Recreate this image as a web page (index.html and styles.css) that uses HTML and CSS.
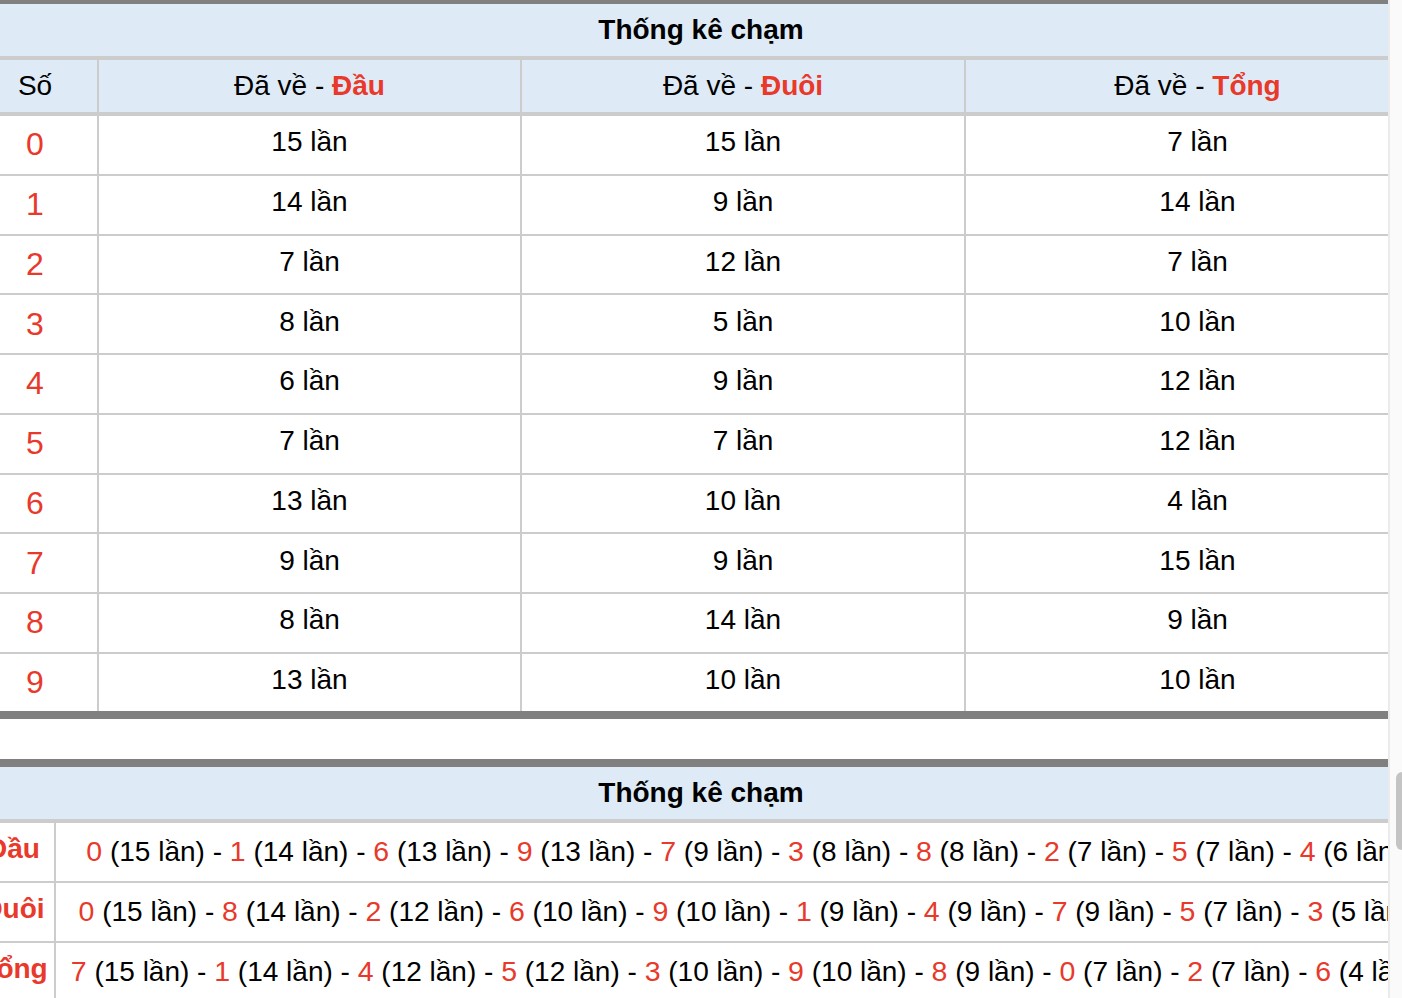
FILE: index.html
```html
<!DOCTYPE html>
<html lang="vi">
<head>
<meta charset="utf-8">
<title>Thống kê chạm</title>
<link rel="stylesheet" href="styles.css">
</head>
<body>
<div class="page">
  <div class="wrap">
    <table class="stat t1">
      <colgroup>
        <col class="w1"><col class="w2"><col class="w3"><col class="w4">
      </colgroup>
      <thead>
        <tr><th colspan="4" class="title">Thống kê chạm</th></tr>
        <tr class="head">
          <th>Số</th>
          <th>Đã về - <span class="hl">Đầu</span></th>
          <th>Đã về - <span class="hl">Đuôi</span></th>
          <th>Đã về - <span class="hl">Tổng</span></th>
        </tr>
      </thead>
      <tbody>
        <tr><td class="num">0</td><td>15 lần</td><td>15 lần</td><td>7 lần</td></tr>
        <tr><td class="num">1</td><td>14 lần</td><td>9 lần</td><td>14 lần</td></tr>
        <tr><td class="num">2</td><td>7 lần</td><td>12 lần</td><td>7 lần</td></tr>
        <tr><td class="num">3</td><td>8 lần</td><td>5 lần</td><td>10 lần</td></tr>
        <tr><td class="num">4</td><td>6 lần</td><td>9 lần</td><td>12 lần</td></tr>
        <tr><td class="num">5</td><td>7 lần</td><td>7 lần</td><td>12 lần</td></tr>
        <tr><td class="num">6</td><td>13 lần</td><td>10 lần</td><td>4 lần</td></tr>
        <tr><td class="num">7</td><td>9 lần</td><td>9 lần</td><td>15 lần</td></tr>
        <tr><td class="num">8</td><td>8 lần</td><td>14 lần</td><td>9 lần</td></tr>
        <tr><td class="num">9</td><td>13 lần</td><td>10 lần</td><td>10 lần</td></tr>
      </tbody>
    </table>
  </div>

  <div class="wrap gap">
    <table class="stat t2">
      <colgroup>
        <col class="l1"><col class="l2">
      </colgroup>
      <thead>
        <tr><th colspan="2" class="title">Thống kê chạm</th></tr>
      </thead>
      <tbody>
        <tr>
          <td class="lbl">Đầu</td>
          <td class="seq"><span class="d">0</span> (15 lần) - <span class="d">1</span> (14 lần) - <span class="d">6</span> (13 lần) - <span class="d">9</span> (13 lần) - <span class="d">7</span> (9 lần) - <span class="d">3</span> (8 lần) - <span class="d">8</span> (8 lần) - <span class="d">2</span> (7 lần) - <span class="d">5</span> (7 lần) - <span class="d">4</span> (6 lần)</td>
        </tr>
        <tr>
          <td class="lbl">Đuôi</td>
          <td class="seq"><span class="d">0</span> (15 lần) - <span class="d">8</span> (14 lần) - <span class="d">2</span> (12 lần) - <span class="d">6</span> (10 lần) - <span class="d">9</span> (10 lần) - <span class="d">1</span> (9 lần) - <span class="d">4</span> (9 lần) - <span class="d">7</span> (9 lần) - <span class="d">5</span> (7 lần) - <span class="d">3</span> (5 lần)</td>
        </tr>
        <tr>
          <td class="lbl">Tổng</td>
          <td class="seq"><span class="d">7</span> (15 lần) - <span class="d">1</span> (14 lần) - <span class="d">4</span> (12 lần) - <span class="d">5</span> (12 lần) - <span class="d">3</span> (10 lần) - <span class="d">9</span> (10 lần) - <span class="d">8</span> (9 lần) - <span class="d">0</span> (7 lần) - <span class="d">2</span> (7 lần) - <span class="d">6</span> (4 lần)</td>
        </tr>
      </tbody>
    </table>
  </div>
</div>
<div class="scrollbar"><div class="thumb"></div></div>
</body>
</html>
```

FILE: styles.css
```css
html, body {
  margin: 0;
  padding: 0;
  background: #ffffff;
}

body {
  font-family: "Liberation Sans", Arial, Helvetica, sans-serif;
  color: #000000;
  overflow: hidden;
}

.page {
  width: 1402px;
  overflow: hidden;
}

.wrap {
  display: flex;
  justify-content: center;
  width: 1402px;
}

.wrap.gap {
  margin-top: 40px;
}

.stat {
  flex-shrink: 0;
  width: 1456px;
  table-layout: fixed;
  border-collapse: separate;
  border-spacing: 0;
  font-size: 28px;
}

.stat th,
.stat td {
  box-sizing: border-box;
  padding: 0;
  text-align: center;
  vertical-align: middle;
  white-space: nowrap;
}

.t1 {
  border-top: 4px solid #808080;
  border-bottom: 8px solid #808080;
}

.t2 {
  border-top: 8px solid #808080;
}

.w1 { width: 124px; }
.w2 { width: 423px; }
.w3 { width: 444px; }
.w4 { width: 465px; }

.l1 { width: 81px; }
.l2 { width: 1375px; }

.title {
  height: 56px;
  background: #deebf7;
  border-bottom: 4px solid #cccccc;
  font-weight: bold;
}

.head th {
  height: 56px;
  background: #deebf7;
  border-bottom: 4px solid #cccccc;
  font-weight: normal;
}

.head th + th {
  border-left: 2px solid #cccccc;
}

.hl {
  color: #e8392b;
  font-weight: bold;
}

.t1 tbody td {
  height: 59.75px;
  border-bottom: 2px solid #cccccc;
  padding-bottom: 5px;
}

.t1 tbody tr:last-child td {
  height: 57px;
  border-bottom: none;
}

.t1 tbody td + td {
  border-left: 2px solid #cccccc;
}

.t1 td.num {
  color: #e8392b;
  font-size: 32px;
  padding-bottom: 0;
}

.t2 tbody td {
  height: 60px;
  border-bottom: 2px solid #cccccc;
}

.t2 tbody td + td {
  border-left: 2px solid #cccccc;
}

.t2 .lbl {
  color: #e8392b;
  font-weight: bold;
  padding-bottom: 6px;
}

.t2 .seq {
  padding-left: 4px;
}

.d {
  color: #e8392b;
  font-size: 28.5px;
}

.scrollbar {
  position: fixed;
  top: 0;
  right: 0;
  width: 14px;
  height: 100%;
  box-sizing: border-box;
  background: #fafafa;
  border-left: 2px solid #ebebeb;
  overflow: hidden;
}

.thumb {
  position: absolute;
  top: 772px;
  left: 6px;
  width: 12px;
  height: 78px;
  border-radius: 6px;
  background: #c4c4c4;
}
```
